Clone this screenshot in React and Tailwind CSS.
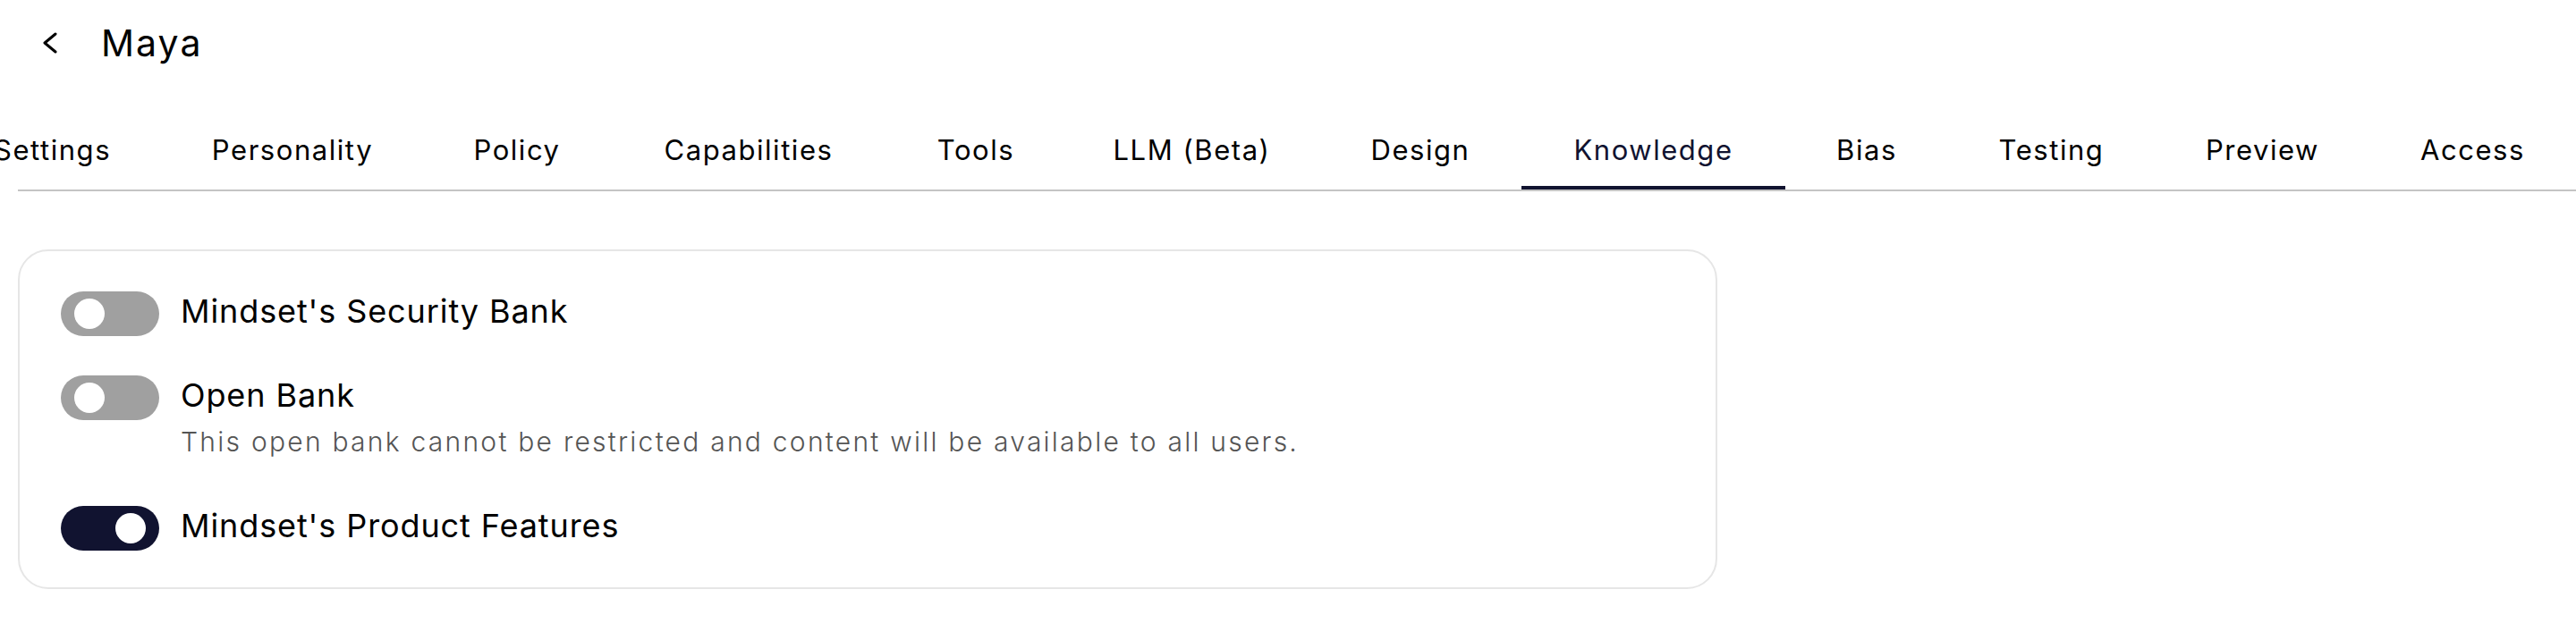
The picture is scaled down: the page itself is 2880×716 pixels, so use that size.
import { useState } from "react"

const tabs = [
  { label: "Settings", w: "w-[243px]" },
  { label: "Personality", w: "w-[294px]" },
  { label: "Policy", w: "w-[208px]" },
  { label: "Capabilities", w: "w-[310px]" },
  { label: "Tools", w: "w-[198px]" },
  { label: "LLM (Beta)", w: "w-[285px]" },
  { label: "Design", w: "w-[226px]" },
  { label: "Knowledge", w: "w-[295px]" },
  { label: "Bias", w: "w-[182px]" },
  { label: "Testing", w: "w-[231px]" },
  { label: "Preview", w: "w-[241px]" },
  { label: "Access", w: "w-[229px]" },
]

function Toggle({ on, onClick }) {
  return (
    <button
      onClick={onClick}
      className={`flex-none w-[110px] h-[50px] rounded-full flex items-center px-[15px] ${
        on ? "bg-[#111330] justify-end" : "bg-[#a0a0a0] justify-start"
      }`}
    >
      <span className="block w-[34px] h-[34px] rounded-full bg-white" />
    </button>
  )
}

export default function App() {
  const [active] = useState("Knowledge")
  const [banks, setBanks] = useState({ security: false, open: false, product: true })
  const flip = (k) => setBanks((b) => ({ ...b, [k]: !b[k] }))

  return (
    <div className="w-[2880px] bg-white text-black font-['Inter',sans-serif]">
      {/* header */}
      <div className="h-[96px] flex items-center pl-[47px]">
        <svg width="17" height="24" viewBox="0 0 17 24" fill="none" className="flex-none">
          <path d="M15 2 L3 12 L15 22" stroke="#000" strokeWidth="3" strokeLinecap="round" strokeLinejoin="round" />
        </svg>
        <h1 className="ml-[49px] text-[41px] leading-none font-normal tracking-[0.05em]">Maya</h1>
      </div>

      {/* tabs, scrolled a little to the right */}
      <div className="overflow-hidden">
        <div className="flex -ml-[63px] pt-[48px]">
          {tabs.map((t) => (
            <div
              key={t.label}
              className={`flex-none ${t.w} flex justify-center pb-[16px] border-b-4 text-[31px] leading-[48px] tracking-[0.05em] whitespace-nowrap ${
                t.label === active ? "border-[#111330] text-[#111330]" : "border-transparent text-black"
              }`}
            >
              {t.label}
            </div>
          ))}
        </div>
        <div className="ml-[20px] h-[2px] bg-[#c4c4c4]" />
      </div>

      {/* knowledge banks */}
      <div className="px-[20px] pt-[65px] pb-[57px]">
        <div className="w-[1900px] rounded-[34px] border-2 border-[#e6e6e6] pt-[45px] pb-[41px] pl-[46px] flex flex-col gap-[44px]">
          <div className="flex items-center gap-[24px]">
            <Toggle on={banks.security} onClick={() => flip("security")} />
            <span className="pb-[6px] text-[36px] leading-none tracking-[0.025em]">Mindset's Security Bank</span>
          </div>
          <div className="flex gap-[24px] mb-[8px]">
            <Toggle on={banks.open} onClick={() => flip("open")} />
            <div className="flex flex-col">
              <span className="h-[50px] pb-[6px] flex items-center text-[36px] leading-none tracking-[0.025em]">Open Bank</span>
              <p className="mt-[4px] text-[30px] leading-[40px] font-light tracking-[0.075em] text-[#555555]">
                This open bank cannot be restricted and content will be available to all users.
              </p>
            </div>
          </div>
          <div className="flex items-center gap-[24px]">
            <Toggle on={banks.product} onClick={() => flip("product")} />
            <span className="pb-[6px] text-[36px] leading-none tracking-[0.025em]">Mindset's Product Features</span>
          </div>
        </div>
      </div>
    </div>
  )
}
